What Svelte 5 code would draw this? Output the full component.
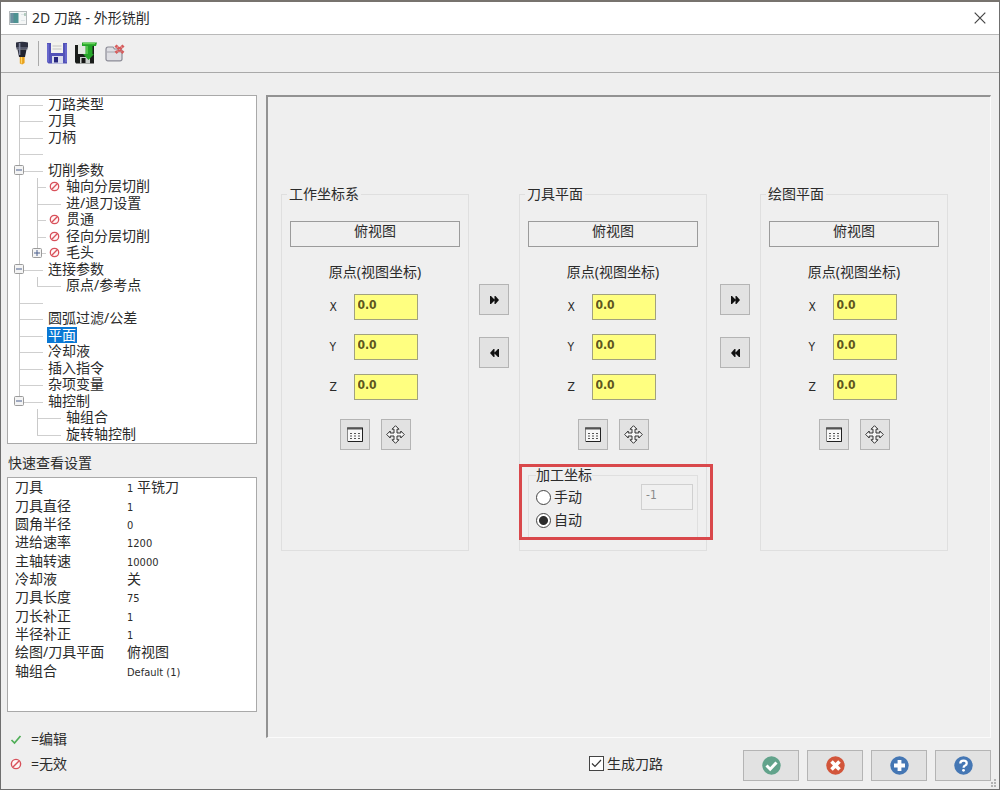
<script>
  const tree = [
    { level: 0, text: '刀路类型', first: true },
    { level: 0, text: '刀具' },
    { level: 0, text: '刀柄' },
    { level: 0, text: '' },
    { level: 0, text: '切削参数', box: '-' },
    { level: 1, text: '轴向分层切削', off: true, root: true },
    { level: 1, text: '进/退刀设置', root: true },
    { level: 1, text: '贯通', off: true, root: true },
    { level: 1, text: '径向分层切削', off: true, root: true },
    { level: 1, text: '毛头', off: true, root: true, box: '+', last: true },
    { level: 0, text: '连接参数', box: '-' },
    { level: 1, text: '原点/参考点', root: true, last: true },
    { level: 0, text: '' },
    { level: 0, text: '圆弧过滤/公差' },
    { level: 0, text: '平面', selected: true },
    { level: 0, text: '冷却液' },
    { level: 0, text: '插入指令' },
    { level: 0, text: '杂项变量' },
    { level: 0, text: '轴控制', box: '-', last: true },
    { level: 1, text: '轴组合' },
    { level: 1, text: '旋转轴控制', last: true }
  ];

  const settings = [
    ['刀具', '1', '平铣刀'],
    ['刀具直径', '1', ''],
    ['圆角半径', '0', ''],
    ['进给速率', '1200', ''],
    ['主轴转速', '10000', ''],
    ['冷却液', '', '关'],
    ['刀具长度', '75', ''],
    ['刀长补正', '1', ''],
    ['半径补正', '1', ''],
    ['绘图/刀具平面', '', '俯视图'],
    ['轴组合', 'Default (1)', '']
  ];

  const planes = [
    { id: 'wcs', title: '工作坐标系' },
    { id: 'tool', title: '刀具平面' },
    { id: 'draw', title: '绘图平面' }
  ];

  let values = $state({
    wcs: { X: '0.0', Y: '0.0', Z: '0.0' },
    tool: { X: '0.0', Y: '0.0', Z: '0.0' },
    draw: { X: '0.0', Y: '0.0', Z: '0.0' }
  });
  let mode = $state('auto');
  let generate = $state(true);
</script>

{#snippet ban()}
  <svg class="ban" width="11" height="11" viewBox="0 0 11 11" aria-hidden="true">
    <circle cx="5.5" cy="5.5" r="4.2" fill="#fff5f5" stroke="#d8505a" stroke-width="1.3" />
    <path d="M2.8 8.2 8.2 2.8" stroke="#d8505a" stroke-width="1.3" />
  </svg>
{/snippet}

{#snippet expander(sign)}
  <svg width="10" height="10" viewBox="0 0 10 10" aria-hidden="true">
    <rect x=".5" y=".5" width="9" height="9" rx="1" fill="#f4f4f4" stroke="#9b9b9b" />
    <path d={sign === '+' ? 'M2 5h6M5 2v6' : 'M2 5h6'} stroke="#4b5f8c" stroke-width="1" />
  </svg>
{/snippet}

<div class="window">
  <header class="title">
    <svg width="18" height="14" viewBox="0 0 18 14" aria-hidden="true">
      <rect x=".5" y=".5" width="17" height="13" fill="#f4f6f6" stroke="#b5babc" />
      <rect x="1.5" y="2" width="8" height="10" fill="#4e9292" />
      <rect x="1.5" y="2" width="3" height="10" fill="#6c8fa0" />
      <path d="M12 3.5h4M12 9.5h4" stroke="#dfe6e8" />
      <path d="M16 2v3" stroke="#79a58c" />
    </svg>
    <h1>2D 刀路 - 外形铣削</h1>
    <button class="close" aria-label="关闭">
      <svg width="12" height="12" viewBox="0 0 12 12"><path d="M.7.7l10.600 10.600M11.300.7.7 11.300" stroke="#444" stroke-width="1.200" /></svg>
    </button>
  </header>

  <div class="toolbar">
    <button class="tool" aria-label="刀具">
      <svg width="14" height="24" viewBox="0 0 14 24">
        <path d="M1 1.500Q7 0 13 1.500V6.500H1Z" fill="#2d3040" />
        <path d="M1.500 6h11v2.500h-11z" fill="#55596b" />
        <path d="M2.500 8.500h9L10 16H4Z" fill="#20222e" />
        <path d="M4.600 2v12" stroke="#8288a0" stroke-width="1.600" />
        <path d="M4.800 16h4.800v6l-2.400 1.500-2.400-1z" fill="#e8a01c" />
        <path d="M6.500 16v6.500" stroke="#ffd565" stroke-width="1.300" />
      </svg>
    </button>
    <span class="rule"></span>
    <button class="tool" aria-label="保存">
      <svg width="20" height="22" viewBox="0 0 20 22">
        <path d="M0 1h20v20.500H1.500L0 20Z" fill="#5252b8" />
        <path d="M4 0h12v11H4z" fill="#f3f3ee" />
        <path d="M5.500 4h9M5.500 7h9" stroke="#c3c3c3" />
        <path d="M5 14h11v7.500H5z" fill="#d9dcec" />
        <path d="M7 15h4v5.500H7z" fill="#26267c" />
        <path d="M1 2v18M19 2v18" stroke="#7d7de0" />
      </svg>
    </button>
    <button class="tool" aria-label="另存为">
      <svg width="22" height="22" viewBox="0 0 22 22">
        <path d="M0 3h19v18.500H1L0 20Z" fill="#1a1d1b" />
        <path d="M3 2h8v10H3z" fill="#e3e7e1" />
        <path d="M5 15h10v6.500H5z" fill="#c9cecb" />
        <path d="M6.500 16h4v5h-4z" fill="#151515" />
        <path d="M7 .5h15L21 4h-3.500v8H19l-5.500 6L8 12h2.500V4H7Z" fill="#25a529" />
        <path d="M8 1.500h12M12 4v8" stroke="#69d45c" stroke-width="1.400" />
      </svg>
    </button>
    <button class="tool" aria-label="删除">
      <svg width="20" height="18" viewBox="0 0 20 18">
        <path d="M1 5.500Q1 3 3 3h5l1.500 2H15q2 0 2 2v8q0 1.800-2 1.800H3q-2 0-2-1.800Z" fill="#dedee3" stroke="#8b8b96" stroke-width="1.200" />
        <path d="M2 8h14" stroke="#a5a5ae" />
        <path d="M10.500 1.500l8 7.500M18.500 1.500l-8 7.500" stroke="#d65b5b" stroke-width="3" stroke-dasharray="2.400 .4" />
      </svg>
    </button>
  </div>

  <main>
    <aside>
      <ul class="tree">
        {#each tree as row}
          <li>
            {#if row.level === 0}
              <span class="cell line" class:from={row.first} class:to={row.last}>
                {#if row.box}{@render expander(row.box)}{/if}
              </span>
              <span class="cell stub"></span>
            {:else}
              <span class="cell" class:line={row.root} class:plain={row.root}></span>
              <span class="cell line" class:to={row.last}>
                {#if row.box}{@render expander(row.box)}{/if}
              </span>
              {#if row.off}
                <span class="cell mute">{@render ban()}</span>
              {:else}
                <span class="cell stub"></span>
              {/if}
            {/if}
            {#if row.text}<span class="name" class:selected={row.selected}>{row.text}</span>{/if}
          </li>
        {/each}
      </ul>

      <h2>快速查看设置</h2>
      <div class="settings">
        <table>
          <tbody>
            {#each settings as [name, num, word]}
              <tr>
                <th scope="row">{name}</th>
                <td>{#if num}<span class="num">{num}</span>{/if}{#if num && word}{' '}{/if}{word}</td>
              </tr>
            {/each}
          </tbody>
        </table>
      </div>

      <div class="key">
        <p>
          <svg width="12" height="12" viewBox="0 0 12 12" aria-hidden="true"><path d="M1.500 7l3 3L10.500 3" fill="none" stroke="#4fae57" stroke-width="1.700" /></svg>
          =编辑
        </p>
        <p>
          <svg width="12" height="12" viewBox="0 0 12 12" aria-hidden="true"><circle cx="6" cy="6" r="4.600" fill="#fff5f5" stroke="#d8505a" stroke-width="1.400" /><path d="M3 9l6-6" stroke="#d8505a" stroke-width="1.400" /></svg>
          =无效
        </p>
      </div>
    </aside>

    <section class="content">
      <div class="panel">
        {#each planes as plane, i}
          <fieldset class="plane">
            <legend>{plane.title}</legend>
            <input class="view" aria-label={plane.title} value="俯视图" readonly />
            <p class="caption">原点(视图坐标)</p>
            <div class="axes">
              {#each ['X', 'Y', 'Z'] as axis}
                <label for="{plane.id}-{axis}">{axis}</label>
                <input id="{plane.id}-{axis}" bind:value={values[plane.id][axis]} />
              {/each}
            </div>
            <div class="pair">
              <button class="square" aria-label="选择平面">
                <svg width="16" height="15" viewBox="0 0 16 15">
                  <path d="M.5.5h15v14H.5z" fill="#f8f8f8" stroke="#888" />
                  <path d="M0 1.500h16" stroke="#555" stroke-width="2" />
                  <path d="M15.500 1v13.500H1" fill="none" stroke="#222" />
                  <path d="M3 6.500h2M7 6.500h2M11 6.500h2M3 9h2M7 9h2M11 9h2M3 11.500h2M7 11.500h2M11 11.500h2" stroke="#555" />
                </svg>
              </button>
              <button class="square" aria-label="选择原点">
                <svg width="19" height="19" viewBox="0 0 19 19">
                  <path d="M9.500.7 13 4.200H11V8h3.800V6l3.500 3.500-3.500 3.500V11H11v3.800h2l-3.500 3.500L6 14.800h2V11H4.200v2L.7 9.500 4.200 6v2H8V4.200H6Z" fill="#f6f6f6" stroke="#333" stroke-width="1" />
                </svg>
              </button>
            </div>
            {#if plane.id === 'tool'}
              <fieldset class="offset">
                <legend>加工坐标</legend>
                <div class="modes">
                  <label><input type="radio" name="mode" value="manual" bind:group={mode} />手动</label>
                  <label><input type="radio" name="mode" value="auto" bind:group={mode} />自动</label>
                </div>
                <input class="number" aria-label="加工坐标" value="-1" disabled={mode === 'auto'} />
                <span class="mark"></span>
              </fieldset>
            {/if}
          </fieldset>
          {#if i < 2}
            <div class="copy">
              <button class="square" aria-label="向右复制">
                <svg width="9" height="8" viewBox="0 0 9 8"><path d="M0 0h1l3.500 3.500V0h1L9 4 5.500 8h-1V4.500L1 8H0Z" fill="#111" /></svg>
              </button>
              <button class="square" aria-label="向左复制">
                <svg width="9" height="8" viewBox="0 0 9 8"><path d="M9 0H8L4.500 3.500V0h-1L0 4l3.500 4h1V4.500L8 8h1Z" fill="#111" /></svg>
              </button>
            </div>
          {/if}
        {/each}
      </div>

      <footer>
        <label class="check"><input type="checkbox" bind:checked={generate} />生成刀路</label>
        <button aria-label="确定">
          <svg width="19" height="19" viewBox="0 0 19 19"><circle cx="9.500" cy="9.500" r="9.200" fill="#62a38b" /><path d="M4.500 9.500l3.700 3.700L14.500 6.500" fill="none" stroke="#fff" stroke-width="3" /></svg>
        </button>
        <button aria-label="取消">
          <svg width="19" height="19" viewBox="0 0 19 19"><circle cx="9.500" cy="9.500" r="9.200" fill="#d2553a" /><path d="M5.500 5.500l8 8M13.500 5.500l-8 8" stroke="#fff" stroke-width="3.600" /></svg>
        </button>
        <button aria-label="应用">
          <svg width="19" height="19" viewBox="0 0 19 19"><circle cx="9.500" cy="9.500" r="9.200" fill="#4577b4" /><path d="M9.500 4v11M4 9.500h11" stroke="#fff" stroke-width="3.800" /></svg>
        </button>
        <button aria-label="帮助">
          <svg width="19" height="19" viewBox="0 0 19 19"><circle cx="9.500" cy="9.500" r="9.200" fill="#4577b4" /><path d="M6.300 7.500Q6.300 4.700 9.500 4.700t3.200 2.500q0 1.500-1.600 2.300-1.500.7-1.500 2.200" fill="none" stroke="#fff" stroke-width="2.300" /><circle cx="9.500" cy="14.300" r="1.400" fill="#fff" /></svg>
        </button>
      </footer>
    </section>
  </main>
  <svg class="grip" width="8" height="8" viewBox="0 0 8 8" aria-hidden="true"><path d="M5 0h2v2H5zM5 3h2v2H5zM5 6h2v2H5zM2 3h2v2H2zM2 6h2v2H2z" fill="#b4b4b4" /></svg>
</div>

<style>
  :global(body) {
    margin: 0;
  }
  .window {
    position: relative;
    box-sizing: border-box;
    min-height: 100vh;
    display: flex;
    flex-direction: column;
    border: 1px solid #6f6f6f;
    border-top: 2px solid #77736e;
    background: #efefef;
    color: #2b2b2b;
    font: 14px/18px "Noto Sans", "Noto Sans CJK SC", sans-serif;
  }
  h1, h2, p, ul {
    margin: 0;
    padding: 0;
    font-size: 14px;
    font-weight: 400;
  }
  button, input {
    box-sizing: border-box;
    margin: 0;
    padding: 0;
    font: inherit;
    color: inherit;
  }
  button {
    display: flex;
    align-items: center;
    justify-content: center;
    border: 1px solid #b4b4b4;
    background: #e2e2e2;
  }
  svg {
    flex: none;
    display: block;
  }

  .title {
    display: flex;
    align-items: center;
    gap: 5px;
    height: 32px;
    padding: 0 13px 0 8px;
    border-bottom: 1px solid #b9b9b9;
    background: #fff;
  }
  .close {
    margin-left: auto;
    border: 0;
    background: none;
  }
  .toolbar {
    display: flex;
    align-items: center;
    gap: 8px;
    height: 36px;
    padding: 0 14px 1px;
    border-bottom: 1px solid #a9a9a9;
  }
  .tool {
    border: 0;
    background: none;
  }
  .rule {
    width: 1px;
    height: 25px;
    margin-left: 1px;
    background: #aaa;
  }

  main {
    flex: 1;
    display: grid;
    grid-template-columns: 250px minmax(0, 1fr);
    gap: 9px;
    padding: 22px 8px 8px 6px;
  }
  aside {
    display: flex;
    flex-direction: column;
  }
  .tree {
    flex: 1;
    display: grid;
    grid-auto-rows: minmax(16px, 1fr);
    padding: 0 2px 1px;
    border: 1px solid #a9a9a9;
    background: #fff;
    list-style: none;
    line-height: 16px;
  }
  .tree li {
    display: flex;
    align-items: stretch;
    white-space: nowrap;
  }
  .cell {
    flex: none;
    width: 18px;
    display: flex;
    align-items: center;
    justify-content: center;
  }
  .mute {
    justify-content: flex-start;
    box-sizing: border-box;
    padding-left: 3px;
  }
  .line {
    background:
      linear-gradient(#c9c9c9, #c9c9c9) 9px 0 / 1px 100% no-repeat,
      linear-gradient(#cfcfcf, #cfcfcf) 9px 9px / 9px 1px no-repeat;
  }
  .line.plain {
    background: linear-gradient(#c9c9c9, #c9c9c9) 9px 0 / 1px 100% no-repeat;
  }
  .line.from {
    background:
      linear-gradient(#c9c9c9, #c9c9c9) 9px 9px / 1px 100% no-repeat,
      linear-gradient(#cfcfcf, #cfcfcf) 9px 9px / 9px 1px no-repeat;
  }
  .line.to {
    background:
      linear-gradient(#c9c9c9, #c9c9c9) 9px 0 / 1px 9px no-repeat,
      linear-gradient(#cfcfcf, #cfcfcf) 9px 9px / 9px 1px no-repeat;
  }
  .stub {
    background: linear-gradient(#cfcfcf, #cfcfcf) 0 9px / 15px 1px no-repeat;
  }
  .name {
    margin-left: 1px;
    padding: 0 1px;
  }
  .selected {
    background: #0a78d4;
    color: #fff;
  }
  h2 {
    padding: 10px 0 5px 1px;
  }
  .settings {
    min-height: 235px;
    box-sizing: border-box;
    border: 1px solid #a9a9a9;
    background: #fff;
  }
  table {
    width: 100%;
    height: 202px;
    border-collapse: collapse;
  }
  th, td {
    padding: 0;
    font-weight: 400;
    text-align: left;
    white-space: nowrap;
  }
  th {
    width: 112px;
    padding-left: 7px;
  }
  .num {
    font-family: "DejaVu Sans Condensed", "Noto Sans", sans-serif;
    font-size: 11px;
    line-height: 11px;
  }
  .key {
    display: grid;
    gap: 7px;
    padding: 18px 0 8px 3px;
  }
  .key p {
    display: flex;
    align-items: center;
    gap: 9px;
  }

  .content {
    display: flex;
    flex-direction: column;
  }
  .panel {
    flex: 1;
    display: grid;
    grid-template-columns: minmax(0, 1fr) 30px minmax(0, 1fr) 33px minmax(0, 1fr);
    gap: 10px;
    align-items: start;
    padding: 88px 42px 12px 13px;
    border: 1px solid #fbfbfb;
    border-top: 2px solid #929292;
    border-left: 2px solid #929292;
  }
  fieldset {
    box-sizing: border-box;
    min-width: 0;
    margin: 0;
    border: 1px solid #dfdfdf;
  }
  legend {
    padding: 0 2px;
  }
  .plane {
    min-height: 366px;
    padding: 18px 8px 10px 8px;
  }
  .plane > legend {
    margin-left: -3px;
  }
  .view {
    display: block;
    width: 100%;
    height: 26px;
    padding-bottom: 8px;
    border: 1px solid #9b9b9b;
    background: transparent;
    text-align: center;
  }
  .caption {
    padding: 16px 0 13px;
    text-align: center;
  }
  .axes {
    display: grid;
    grid-template-columns: 10px 64px;
    gap: 14px;
    justify-content: center;
    align-items: center;
    padding-right: 3px;
    font-family: "DejaVu Sans Condensed", "Noto Sans", sans-serif;
    font-size: 12px;
  }
  .axes input {
    width: 100%;
    height: 26px;
    padding: 0 3px 4px;
    border: 1px solid #a2a27e;
    background: #ffff80;
    color: #5d5620;
    font-weight: 600;
  }
  .pair {
    display: flex;
    justify-content: center;
    gap: 11px;
    padding-top: 19px;
  }
  .square {
    width: 30px;
    height: 31px;
  }
  .copy {
    display: grid;
    gap: 22px;
    justify-content: end;
    padding-top: 99px;
  }
  .offset {
    position: relative;
    display: flex;
    justify-content: space-between;
    align-items: flex-start;
    height: 73px;
    margin-top: 16px;
    padding: 0 4px 0 7px;
  }
  .offset legend {
    padding: 0;
  }
  .modes {
    display: grid;
    gap: 5px;
    padding-top: 4px;
  }
  .modes label, .check {
    display: flex;
    align-items: center;
    gap: 3px;
  }
  input[type="radio"], input[type="checkbox"] {
    appearance: none;
    width: 15px;
    height: 15px;
    border: 1px solid #444;
    background: #fff;
  }
  input[type="radio"] {
    border-radius: 50%;
  }
  input[type="radio"]:checked {
    background: radial-gradient(circle, #2b2b2b 4px, #fff 5px);
  }
  input[type="checkbox"]:checked {
    background: #fff url("data:image/svg+xml,%3Csvg xmlns='http://www.w3.org/2000/svg' viewBox='0 0 13 13'%3E%3Cpath d='M2 6.500l3 3 6-6.500' fill='none' stroke='%23333' stroke-width='1.200'/%3E%3C/svg%3E");
  }
  .number {
    width: 52px;
    height: 26px;
    padding: 0 4px 4px;
    border: 1px solid #d0d0d0;
    background: #f0f0f0;
    color: #8a8a8a;
    font-family: "DejaVu Sans Condensed", "Noto Sans", sans-serif;
    font-size: 12px;
  }
  .mark {
    position: absolute;
    inset: -20px -16px -2px -10px;
    border: 3px solid #d9484b;
    pointer-events: none;
  }

  footer {
    display: flex;
    justify-content: flex-end;
    gap: 8px;
    padding-top: 12px;
  }
  footer button {
    width: 56px;
    height: 31px;
  }
  .check {
    margin: 0 72px 4px 0;
  }
  .grip {
    position: absolute;
    right: 2px;
    bottom: 2px;
  }
</style>
